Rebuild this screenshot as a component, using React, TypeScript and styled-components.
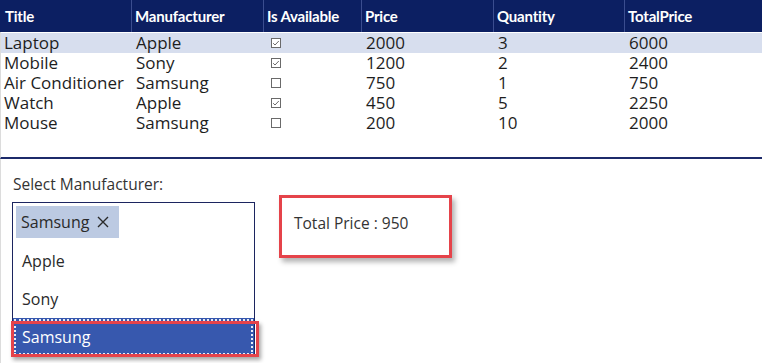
import React from "react";
import styled, { createGlobalStyle } from "styled-components";

const Global = createGlobalStyle`
  html, body { margin: 0; padding: 0; background: #fff; }
  body { font-family: "Open Sans", "Liberation Sans", sans-serif; color: #222; }
`;

const Page = styled.div`
  width: 762px;
  height: 363px;
  overflow: hidden;
  position: relative;
  background: #fff;
`;

const cols = "131px 132px 98px 132px 131px 1fr";

const Table = styled.div`
  height: 159px;
  border-bottom: 2px solid #1c2a6a;
  border-left: 1px solid #dcdcdc;
  box-sizing: border-box;
`;

const HeaderRow = styled.div`
  display: grid;
  grid-template-columns: ${cols};
  height: 32px;
  background: #0c1f62;
  margin-left: -1px;
`;

const HeadCell = styled.div<{ $first?: boolean }>`
  display: flex;
  align-items: center;
  padding-left: ${(p) => (p.$first ? 5 : 3)}px;
  border-left: ${(p) => (p.$first ? "none" : "1px solid #3b4d8f")};
  color: #fff;
  font-family: Lato, "Liberation Sans", sans-serif;
  font-weight: 700;
  font-size: 15px;
  letter-spacing: -0.2px;
`;

const Row = styled.div<{ $selected?: boolean }>`
  display: grid;
  grid-template-columns: ${cols};
  height: 20px;
  overflow: hidden;
  margin-top: ${(p) => (p.$selected ? 1 : 0)}px;
  background: ${(p) => (p.$selected ? "#d7deee" : "transparent")};
`;

const Cell = styled.div<{ $first?: boolean }>`
  font-size: 17px;
  line-height: 20px;
  height: 20px;
  overflow: hidden;
  white-space: nowrap;
  padding-left: ${(p) => (p.$first ? 3 : 4)}px;
  color: #1e1e1e;
`;

const CheckCell = styled.div`
  display: flex;
  align-items: center;
  padding-left: 7px;
  height: 20px;
`;

const Check = ({ on }: { on: boolean }) => (
  <svg width="10" height="10" viewBox="0 0 10 10">
    <rect x="0.5" y="0.5" width="9" height="9" fill="#fff" stroke="#6a6a6a" strokeWidth="1" />
    {on && <path d="M2.2 5.2 L4 7 L7.8 3" fill="none" stroke="#6a6a6a" strokeWidth="1" />}
  </svg>
);

const Lower = styled.div`
  display: flex;
  align-items: flex-start;
  gap: 24px;
  padding-left: 11px;
  border-left: 1px solid #dcdcdc;
  height: 204px;
  box-sizing: border-box;
`;

const FilterCol = styled.div`
  display: flex;
  flex-direction: column;
  position: relative;
`;

const Label = styled.div`
  font-size: 15.5px;
  color: #333;
  padding-left: 1px;
  margin-top: 14px;
  height: 29px;
  line-height: 22px;
`;

const Combo = styled.div`
  width: 243px;
  border: 1px solid #1c2560;
  box-sizing: border-box;
  display: flex;
  flex-direction: column;
  background: #fff;
`;

const TagArea = styled.div`
  padding: 3px;
  height: 39px;
  box-sizing: border-box;
`;

const Tag = styled.div`
  display: inline-flex;
  align-items: center;
  gap: 8px;
  height: 32px;
  width: 103px;
  box-sizing: border-box;
  padding-left: 5px;
  background: #bccae2;
  font-size: 16px;
  color: #2a2a2a;
`;

const Option = styled.div<{ $active?: boolean }>`
  height: 38px;
  display: flex;
  align-items: center;
  padding-left: 9px;
  font-size: 16px;
  color: ${(p) => (p.$active ? "#fff" : "#2a2a2a")};
  background: ${(p) => (p.$active ? "#3758ae" : "transparent")};
  outline: ${(p) => (p.$active ? "2px dotted #e8ecf7" : "none")};
  outline-offset: -3px;
`;

const Marker = styled.div`
  position: absolute;
  left: -1px;
  top: 162px;
  width: 248px;
  height: 36px;
  border: 3px solid #e5434a;
  box-sizing: border-box;
  box-shadow: 2px 3px 4px rgba(0, 0, 0, 0.35);
  pointer-events: none;
`;

const TotalBox = styled.div`
  margin-top: 36px;
  width: 173px;
  height: 63px;
  border: 3px solid #e5434a;
  box-sizing: border-box;
  box-shadow: 3px 4px 5px rgba(0, 0, 0, 0.3);
  display: flex;
  align-items: center;
  padding-left: 12px;
  padding-bottom: 7px;
  font-size: 15.5px;
  color: #333;
`;

const data = [
  ["Laptop", "Apple", true, 2000, 3, 6000],
  ["Mobile", "Sony", true, 1200, 2, 2400],
  ["Air Conditioner", "Samsung", false, 750, 1, 750],
  ["Watch", "Apple", true, 450, 5, 2250],
  ["Mouse", "Samsung", false, 200, 10, 2000],
] as const;

const heads = ["Title", "Manufacturer", "Is Available", "Price", "Quantity", "TotalPrice"];

export default function App() {
  return (
    <Page>
      <Global />
      <Table>
        <HeaderRow>
          {heads.map((h, i) => (
            <HeadCell key={h} $first={i === 0}>
              {h}
            </HeadCell>
          ))}
        </HeaderRow>
        {data.map((r, i) => (
          <Row key={r[0]} $selected={i === 0}>
            <Cell $first>{r[0]}</Cell>
            <Cell>{r[1]}</Cell>
            <CheckCell>
              <Check on={r[2]} />
            </CheckCell>
            <Cell>{r[3]}</Cell>
            <Cell>{r[4]}</Cell>
            <Cell>{r[5]}</Cell>
          </Row>
        ))}
      </Table>
      <Lower>
        <FilterCol>
          <Label>Select Manufacturer:</Label>
          <Combo>
            <TagArea>
              <Tag>
                Samsung
                <svg width="12" height="12" viewBox="0 0 12 12">
                  <path d="M1 1 L11 11 M11 1 L1 11" stroke="#2a2a2a" strokeWidth="1.4" />
                </svg>
              </Tag>
            </TagArea>
            <Option>Apple</Option>
            <Option>Sony</Option>
            <Option $active>Samsung</Option>
          </Combo>
          <Marker />
        </FilterCol>
        <TotalBox>Total Price : 950</TotalBox>
      </Lower>
    </Page>
  );
}
